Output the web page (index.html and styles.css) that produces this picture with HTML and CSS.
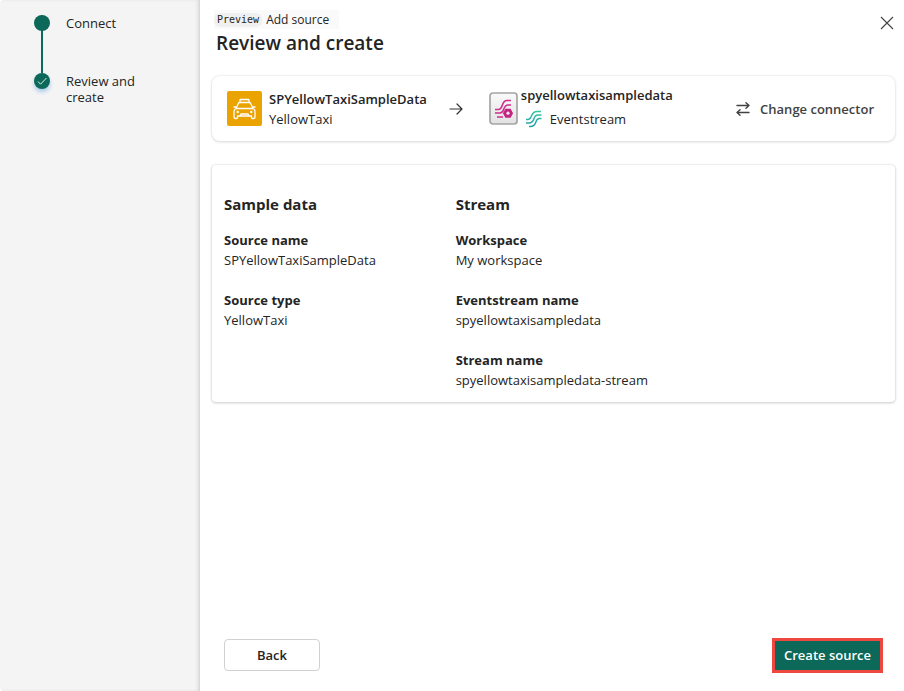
FILE: index.html
```html
<!DOCTYPE html>
<html lang="en">
<head>
<meta charset="utf-8">
<meta name="viewport" content="width=device-width, initial-scale=1">
<title>Add source</title>
<link rel="stylesheet" href="styles.css">
</head>
<body>
<div class="wizard">
  <nav class="sidebar" aria-label="Steps">
    <ol class="steps">
      <li class="step">
        <span class="dot"></span>
        <span class="step-label">Connect</span>
      </li>
      <li class="step" aria-current="step">
        <span class="dot dot-current">
          <svg width="16" height="16" viewBox="0 0 16 16" fill="none" stroke="#d5eee5" stroke-width="1"><path d="M4 8.500l2.500 2.700L12.500 5"/></svg>
        </span>
        <span class="step-label">Review and create</span>
      </li>
    </ol>
  </nav>
  <main class="content">
    <header class="header">
      <div>
        <div class="crumb"><span class="badge">Preview</span><span>Add source</span></div>
        <h1>Review and create</h1>
      </div>
      <button class="close" type="button" aria-label="Close">
        <svg width="14" height="14" viewBox="0 0 14 14" fill="none" stroke="#424242" stroke-width="1.1"><path d="M1 1l12 12M13 1L1 13"/></svg>
      </button>
    </header>

    <section class="card summary">
      <div class="source">
        <svg class="taxi" width="35" height="35" viewBox="0 0 35 35" fill="none" stroke="#fff" stroke-width="1.3" stroke-linejoin="round">
          <rect width="35" height="35" rx="2" fill="#eba300" stroke="none"/>
          <path d="M13 11.500V9q0-.5.5-.5h8q.5 0 .5.500v2.500M9 17.500l2.300-5q.4-1 1.400-1h9.600q1 0 1.400 1l2.300 5M9 17.500h17M9 17.500q-2 1-2 3V26q0 1.500 1.300 1.500h1.200q1 0 1-1.200V25h14v1.300q0 1.200 1 1.200h1.200Q28 27.500 28 26v-5.500q0-2-2-3M6.500 16H9M26 16h2.500M13 25l1-2h7l1 2"/>
          <circle cx="10.700" cy="21" r="1.200" fill="#fff" stroke="none"/>
          <circle cx="24.300" cy="21" r="1.200" fill="#fff" stroke="none"/>
        </svg>
        <div>
          <div class="name">SPYellowTaxiSampleData</div>
          <div class="kind">YellowTaxi</div>
        </div>
      </div>
      <svg class="arrow" width="16" height="16" viewBox="0 0 16 16" fill="none" stroke="#333" stroke-width="1.200" stroke-linecap="round" stroke-linejoin="round"><path d="M2 8h12M9 3l5 5-5 5"/></svg>
      <div class="target">
        <svg class="stream-tile" width="29" height="33" viewBox="0 0 29 33">
          <defs><linearGradient id="tile" x2="0" y2="1"><stop stop-color="#fafafa"/><stop offset="1" stop-color="#e2e2e2"/></linearGradient></defs>
          <rect x="1" y="1" width="27" height="31" rx="3" fill="url(#tile)" stroke="#a5a5a5" stroke-width="1.700"/>
          <g fill="none" stroke="#d12d8a" stroke-width="1.600">
            <path d="M6 17.500h3.500c5 0 2.500-9 8.500-9h4M6 21h5c5 0 2.500-8 8-8h3M8 25h6"/>
          </g>
          <path d="M16.800 17.300h4.400l2.200 3.900-2.200 3.900h-4.400l-2.200-3.900z" fill="#c42382" stroke="#c42382" stroke-width="1.200" stroke-linejoin="round"/>
          <circle cx="19" cy="21.200" r="1.600" fill="#f1e7ed"/>
        </svg>
        <div class="target-text">
          <div class="name">spyellowtaxisampledata</div>
          <div class="kind kind-stream">
            <svg width="18" height="18" viewBox="0 0 18 18" fill="none" stroke="url(#wave)" stroke-width="1.500">
              <defs><linearGradient id="wave" x1="9" y1="0" x2="9" y2="18" gradientUnits="userSpaceOnUse"><stop stop-color="#38c99a"/><stop offset="1" stop-color="#2299b5"/></linearGradient></defs>
              <path d="M1 9.500h1.500C8.500 9.500 4.500 1.500 12 1.500h4M1 13h3c7 0 3-8 9-8h3.500M4 16.500h1.500c7.500 0 3.500-8 9-8h2"/>
            </svg>
            <span>Eventstream</span>
          </div>
        </div>
      </div>
      <button class="change" type="button">
        <svg width="14" height="14" viewBox="0 0 14 14" fill="none" stroke="#424242" stroke-width="1.400" stroke-linecap="round" stroke-linejoin="round"><path d="M1 3.500h12M10 .8l3 2.700-3 2.700M13 10.500H1M4 7.800l-3 2.700 3 2.700"/></svg>
        <span>Change connector</span>
      </button>
    </section>

    <section class="card details">
      <div>
        <h2>Sample data</h2>
        <dl>
          <div><dt>Source name</dt><dd>SPYellowTaxiSampleData</dd></div>
          <div><dt>Source type</dt><dd>YellowTaxi</dd></div>
        </dl>
      </div>
      <div>
        <h2>Stream</h2>
        <dl>
          <div><dt>Workspace</dt><dd>My workspace</dd></div>
          <div><dt>Eventstream name</dt><dd>spyellowtaxisampledata</dd></div>
          <div><dt>Stream name</dt><dd>spyellowtaxisampledata-stream</dd></div>
        </dl>
      </div>
    </section>

    <footer class="footer">
      <button class="back" type="button">Back</button>
      <button class="create" type="button">Create source</button>
    </footer>
  </main>
</div>
</body>
</html>
```
FILE: styles.css
```css
* {
  box-sizing: border-box;
}

body {
  margin: 0;
  background: #fff;
  color: #242424;
  font: 13px/20px "Segoe UI", "Open Sans", "Noto Sans", sans-serif;
}

h1, h2, ol, dl, dd {
  margin: 0;
  padding: 0;
}

button {
  padding: 0;
  border: 0;
  background: none;
  color: inherit;
  font: inherit;
  font-weight: 600;
  cursor: pointer;
}

svg {
  display: block;
  flex: none;
}

.wizard {
  display: grid;
  grid-template-columns: 200px 1fr;
  min-height: 100vh;
}

.sidebar {
  padding: 15px 32px 0 34px;
  border-radius: 4px 0 0 4px;
  background: #f4f4f4;
  box-shadow: inset -3px 0 4px -2px #c8c8c8;
}

.steps {
  list-style: none;
}

.step {
  display: grid;
  grid-template-columns: 16px 1fr;
  column-gap: 16px;
  min-height: 58px;
}

.step:first-child {
  background: linear-gradient(#0c695a, #0c695a) 7px 0 / 2px 100% no-repeat;
}

.dot {
  width: 16px;
  height: 16px;
  border-radius: 50%;
  background: #0c695a;
}

.dot-current {
  box-shadow: 0 3px 4px #a9cbe8;
}

.step-label {
  line-height: 16px;
}

.content {
  display: flex;
  flex-direction: column;
  min-width: 0;
  padding: 10px 9px 18px 12px;
}

.header {
  display: flex;
  justify-content: space-between;
}

.crumb {
  display: flex;
  align-items: center;
  gap: 4px;
  width: fit-content;
  height: 19px;
  margin-left: 2px;
  padding-right: 10px;
  background: #fafafa;
  font-size: 12px;
  line-height: 18px;
}

.badge {
  padding: 0 3px;
  border-radius: 6px;
  background: #f0f0f0;
  font: 10px/14px Consolas, "DejaVu Sans Mono", monospace;
}

h1 {
  margin-left: 4px;
  font-size: 19px;
  font-weight: 600;
  line-height: 28px;
}

.close {
  align-self: flex-start;
  margin: 6px 1px 0 0;
}

.card {
  border-radius: 8px;
  background: #fff;
  box-shadow: 0 0 2px #dcdcdc, 0 1px 3px #dcdcdc;
}

.summary {
  display: flex;
  align-items: center;
  height: 65px;
  margin-top: 19px;
  padding: 0 21px 0 15px;
}

.source,
.target {
  display: flex;
  align-items: center;
}

.source {
  gap: 7px;
}

.target {
  gap: 3px;
}

.target-text {
  padding-bottom: 4px;
}

.arrow {
  margin: 0 25px 0 21px;
}

.name {
  font-weight: 600;
}

.target .name,
.target .kind {
  line-height: 24px;
}

.kind-stream {
  display: flex;
  align-items: center;
  gap: 7px;
  margin-left: 4px;
}

.change {
  display: flex;
  align-items: center;
  gap: 10px;
  margin-left: auto;
  color: #424242;
}

.details {
  display: grid;
  grid-template-columns: 1fr 1fr 1fr;
  margin-top: 24px;
  padding: 28px 12px 12px;
  border-radius: 4px;
  box-shadow: 0 0 2px #d0d0d0, 0 1px 3px #d0d0d0;
}

.details > div:last-child {
  grid-column: span 2;
  margin-left: 12px;
}

h2 {
  font-size: 15px;
  font-weight: 700;
  line-height: 22px;
}

dl {
  display: grid;
  gap: 20px;
  margin-top: 15px;
}

dt {
  font-weight: 700;
}

.footer {
  display: flex;
  align-items: center;
  justify-content: space-between;
  margin-top: auto;
  padding: 0 12px;
}

.back {
  min-width: 96px;
  height: 32px;
  border: 1px solid #d1d1d1;
  border-radius: 4px;
}

.create {
  height: 35px;
  padding: 0 9px 1px;
  border: 3px solid #ee4740;
  background: #0c695a;
  color: #fff;
}

.footer .back {
  align-self: flex-start;
  margin-top: 1px;
  padding-bottom: 1px;
}
```
